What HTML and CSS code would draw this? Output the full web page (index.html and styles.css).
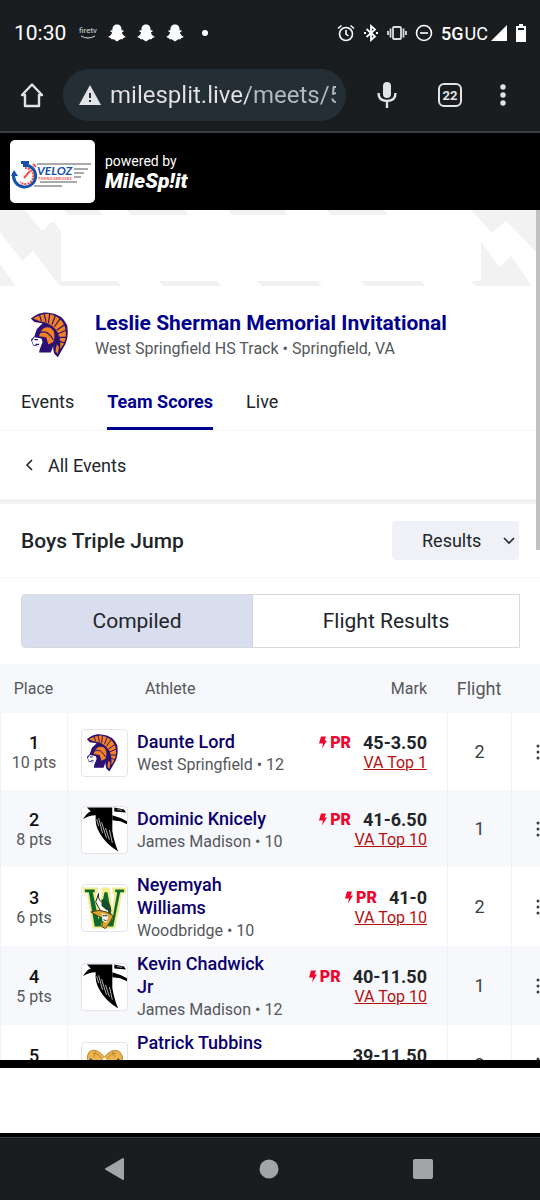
FILE: index.html
```html
<!DOCTYPE html>
<html lang="en">
<head>
<meta charset="utf-8">
<meta name="viewport" content="width=device-width, initial-scale=1">
<title>Leslie Sherman Memorial Invitational</title>
<link rel="stylesheet" href="styles.css">
</head>
<body>
<svg class="defs" aria-hidden="true">
  <symbol id="trojan" viewBox="0 0 46 46">
    <path d="M5 9Q12 3 20 4Q32 5 36 15Q38 27 32 35L28 42L25 39Q23 34 25 30L22 38L12 38L13 33L7 32L5 27L8 24L10 18L15 13L8 12Z" fill="#2a1173"/>
    <path d="M7 9Q13 5 20 5Q31 7 34 16Q37 27 30 35Q31 24 26 18Q21 12 12 11Z" fill="#f58220"/>
    <path d="M13 21Q16 15 22 17Q27 21 24 29L20 31L18 25L12 24Z" fill="#f58220"/>
    <path d="M27 31L29 33L28 39L26 37Z" fill="#f58220"/>
    <path d="M8 25L14 26L15 29L13 34L10 32L7 31L6 28Z" fill="#fff"/>
    <path d="M8 27L11 27M9 31L12 31" stroke="#2a1173" stroke-width="1"/>
    <path d="M12 5L14 11M16 4L18 12M21 5L20 13M26 6L23 14M30 9L25 16M34 14L27 19M35 19L28 22M35 25L29 25M34 30L29 28M13 21Q19 18 24 27" fill="none" stroke="#2a1173" stroke-width="1"/>
  </symbol>
  <symbol id="falcon" viewBox="0 0 46 46">
    <path d="M5 0H31V24Q33 36 37 45Q24 37 18 26Q13 18 14 8Q7 8 1 12Q5 5 9 4Z"/>
    <path d="M33 0L43 2L45 5L33 4Z"/><path d="M31 8L40 11L46 14V17L39 14L31 13Z"/>
    <path d="M32 0V8" stroke="#fff" stroke-width="1"/>
    <path d="M15 12L17 19M17 11L21 26M20 15L25 31M24 21L28 33M28 23L31 36" stroke="#b5b5b5" stroke-width="1"/>
    <path d="M36 2L41 3" stroke="#999"/>
  </symbol>
  <symbol id="viking" viewBox="0 0 46 46">
    <path d="M1 2H16V8H14L17 24L20 8V2H28L31 24L33 8H31V2H45V8H41L34 44H25L23 35L21 44H11L5 8H1Z" fill="#f3ea8c"/>
    <path d="M3 4H13V7H11L17 35L23 7H26L31 35L36 7H34V4H43V7H39L32 42H27L23 28L19 42H13L7 7H3Z" fill="#0b6b2f"/>
    <path d="M17 8Q16 14 20 17L28 23L27 28L19 26L14 17Z" fill="#fff" stroke="#222" stroke-width="1"/>
    <path d="M20 14Q30 15 30 27L25 25L20 21Z" fill="#174d2b"/>
    <path d="M9 27Q18 24 25 27L32 31L29 37L24 44L20 42L22 34L16 31Z" fill="#dca52c" stroke="#51431b" stroke-width="1"/>
    <path d="M20 28L27 31L25 38L21 36Z" fill="#fff"/><path d="M21 31H26M22 35L25 36" stroke="#222"/>
  </symbol>
  <symbol id="ram" viewBox="0 0 46 46">
    <path d="M23 14Q17 6 10 7Q4 9 6 20Q9 30 17 34L23 44L29 34Q38 30 41 20Q43 9 35 7Q28 7 23 14Z" fill="#edb34d" stroke="#b9852e"/>
    <path d="M11 10Q18 9 22 20M35 10Q28 9 24 20M14 8L12 14M31 8L33 14" fill="none" stroke="#b9852e"/>
    <path d="M8 16L15 21M38 16L31 21" stroke="#2b4763" stroke-width="2"/>
    <path d="M23 14L18 20L23 28L28 20Z" fill="#fff"/>
  </symbol>
  <symbol id="bolt" viewBox="0 0 8 12"><path d="M2 0H7L5.500 4H8L3 12L4 7H0Z" fill="#f0052f"/></symbol>
  <symbol id="dots" viewBox="0 0 4 16"><circle cx="2" cy="2" r="1.500"/><circle cx="2" cy="8" r="1.500"/><circle cx="2" cy="14" r="1.500"/></symbol>
  <symbol id="ghost" viewBox="0 0 18 18"><path fill="#fff" d="M9 .5C5.500 .5 4.300 3 4.400 6.500L2.600 6.200L2.300 7.300L4.100 8.600C3.500 10.700 2.300 12 .5 12.600C.4 13.700 2 13.900 3 14.200L3.400 15.300L5.700 15.200L9 17.500L12.300 15.200L14.600 15.300L15 14.200C16 13.900 17.600 13.700 17.500 12.600C15.700 12 14.500 10.700 13.900 8.600L15.700 7.300L15.400 6.200L13.600 6.500C13.700 3 12.500 .5 9 .5Z"/></symbol>
</svg>

<div class="phone">
  <div class="status">
    <span class="clock">10:30</span>
    <span class="fire"><span>firetv</span><svg width="16" height="4" viewBox="0 0 16 4"><path d="M1 1Q8 5 15 1" fill="none" stroke="#ddd"/></svg></span>
    <span class="ghosts"><svg><use href="#ghost"/></svg><svg><use href="#ghost"/></svg><svg><use href="#ghost"/></svg></span>
    <span class="pip"></span>
    <span class="system">
      <svg width="18" height="18" viewBox="0 0 18 18" fill="none" stroke="#fff" stroke-width="1.600"><circle cx="9" cy="10" r="6.500"/><path d="M9 6V10L11.500 12M1 4.500L4.500 1.500M17 4.500L13.500 1.500"/></svg>
      <svg width="16" height="18" viewBox="0 0 16 18" fill="none" stroke="#fff" stroke-width="1.800"><path d="M3.500 5L12 12.500L8 16V2L12 5.500L3.500 13"/><path d="M1 9H3M13 9H15" stroke-width="2"/></svg>
      <svg width="20" height="18" viewBox="0 0 20 18" fill="none" stroke="#ddd" stroke-width="1.800"><rect x="6" y="3" width="8" height="12" rx="1"/><path d="M3.500 4.500V13.500M16.500 4.500V13.500M1 7V11M19 7V11"/></svg>
      <svg width="18" height="18" viewBox="0 0 18 18" fill="none" stroke="#fff" stroke-width="1.600"><circle cx="9" cy="9" r="7.500"/><path d="M5 9H13"/></svg>
      <span class="net">5G<span>UC</span></span>
      <svg width="16" height="16" viewBox="0 0 16 16"><path d="M0 16L16 0V16Z" fill="#fff"/></svg>
      <svg class="battery" width="12" height="18" viewBox="0 0 12 18"><path d="M1 2H4V0H8V2H11V18H1Z" fill="#fff"/><path d="M3 5H9" stroke="#1a1d20" stroke-width="2"/></svg>
    </span>
  </div>

  <div class="browser">
    <button class="bare home" aria-label="Home"><svg width="24" height="26" viewBox="0 0 24 26"><path d="M12 2.500L2 13H5V24H19V13H22Z" fill="none" stroke="#e3e3e6" stroke-width="2.400" stroke-linejoin="round"/></svg></button>
    <div class="address">
      <svg width="22" height="20" viewBox="0 0 22 20"><path d="M11 0L22 20H0Z" fill="#e3e3e6"/><path d="M11 8V13M11 15V17" stroke="#242e35" stroke-width="2"/></svg>
      <input class="url" type="text" aria-label="Address" value="milesplit.live/meets/5">
    </div>
    <button class="bare mic" aria-label="Voice search"><svg width="20" height="28" viewBox="0 0 20 28"><rect x="6" y="1" width="8" height="16" rx="4" fill="#e3e3e6"/><path d="M1.500 12Q1.500 20 10 20Q18.500 20 18.500 12M10 20V27" fill="none" stroke="#e3e3e6" stroke-width="2.400"/></svg></button>
    <button class="bare tabs-count" aria-label="22 open tabs">22</button>
    <button class="bare more" aria-label="More"><svg width="6" height="22" viewBox="0 0 6 22" fill="#e3e3e6"><circle cx="3" cy="3" r="2.700"/><circle cx="3" cy="11" r="2.700"/><circle cx="3" cy="19" r="2.700"/></svg></button>
  </div>

  <header class="brand">
    <svg class="veloz" width="85" height="63" viewBox="0 0 85 63" role="img" aria-label="Veloz Timing Services">
      <rect width="85" height="63" rx="5" fill="#fff"/>
      <path d="M27 24H81M64 29H78M64 33H74M64 37H71M30 42H67M24 46H52" stroke="#555" stroke-width="1"/>
      <path d="M4 33A11 11 0 1 0 15 25" fill="none" stroke="#1550ab" stroke-width="3"/>
      <path d="M1 36L4 30L8 36ZM11 21H19V24H17V27H13V24H11Z" fill="#1550ab"/>
      <path d="M15 28A8 8 0 1 1 10 42" fill="none" stroke="#ef5145" stroke-width="2" stroke-dasharray="2 1"/>
      <path d="M14 38L20 31M23 24L26 27" stroke="#ef5145" stroke-width="2"/>
      <text x="27" y="35" class="veloz-name">VELOZ</text><text x="28" y="40" class="veloz-sub">TIMING SERVICES</text>
    </svg>
    <div class="powered">powered by<strong>MileSp!it</strong></div>
  </header>

  <main class="page">
    <div class="scrollbar"></div>
    <svg class="banner" viewBox="0 0 540 76" preserveAspectRatio="none" fill="#f2f2f2" aria-hidden="true">
      <path d="M0 0H25L42 21L53 11L61 21V71H117L121 76H60L33 41L22 51L0 22ZM0 54L16 76H0Z"/>
      <path d="M64 0H99L103 5H69ZM127 0H185L189 5H131ZM228 0H284L288 5H232ZM327 0H384L388 5H331Z"/>
      <path d="M158 71H217L221 76H164ZM257 71H318L322 76H262ZM360 71H421L425 76H365Z"/>
      <path d="M471 0H540V46L506 11L492 23ZM481 31L499 57L511 46L532 76H477L470 71H481Z"/>
    </svg>
    <section class="meet">
      <svg class="meet-logo" role="img" aria-label="West Springfield"><use href="#trojan"/></svg>
      <div><h1>Leslie Sherman Memorial Invitational</h1><p>West Springfield HS Track • Springfield, VA</p></div>
    </section>
    <nav class="tabs"><a href="#">Events</a><a href="#" class="active">Team Scores</a><a href="#">Live</a></nav>
    <a class="back" href="#"><svg width="8" height="12" viewBox="0 0 8 12"><path d="M7 1L2 6L7 11" fill="none" stroke="#212529" stroke-width="1.600"/></svg>All Events</a>
    <section class="event">
      <h2>Boys Triple Jump</h2>
      <div class="picker">
        <select aria-label="View"><option>Results</option></select>
        <svg width="12" height="8" viewBox="0 0 12 8"><path d="M1 1L6 6L11 1" fill="none" stroke="#212529" stroke-width="1.600"/></svg>
      </div>
    </section>
    <div class="switch"><button class="on">Compiled</button><button>Flight Results</button></div>

    <table>
      <colgroup><col class="c-place"><col class="c-athlete"><col><col class="c-flight"><col class="c-menu"></colgroup>
      <thead><tr><th>Place</th><th class="h-athlete">Athlete</th><th class="h-mark">Mark</th><th class="h-flight">Flight</th><th></th></tr></thead>
      <tbody>
        <tr>
          <td class="place"><b>1</b>10 pts</td>
          <td><div class="athlete"><svg><use href="#trojan"/></svg><div><a href="#">Daunte Lord</a><span>West Springfield • 12</span></div></div></td>
          <td class="mark"><div><svg><use href="#bolt"/></svg><em>PR</em><b>45-3.50</b></div><a href="#">VA Top 1</a></td>
          <td class="flight">2</td>
          <td><button class="menu" aria-label="Options"><svg><use href="#dots"/></svg></button></td>
        </tr>
        <tr>
          <td class="place"><b>2</b>8 pts</td>
          <td><div class="athlete"><svg><use href="#falcon"/></svg><div><a href="#">Dominic Knicely</a><span>James Madison • 10</span></div></div></td>
          <td class="mark"><div><svg><use href="#bolt"/></svg><em>PR</em><b>41-6.50</b></div><a href="#">VA Top 10</a></td>
          <td class="flight">1</td>
          <td><button class="menu" aria-label="Options"><svg><use href="#dots"/></svg></button></td>
        </tr>
        <tr>
          <td class="place"><b>3</b>6 pts</td>
          <td><div class="athlete"><svg><use href="#viking"/></svg><div><a href="#">Neyemyah Williams</a><span>Woodbridge • 10</span></div></div></td>
          <td class="mark"><div><svg><use href="#bolt"/></svg><em>PR</em><b>41-0</b></div><a href="#">VA Top 10</a></td>
          <td class="flight">2</td>
          <td><button class="menu" aria-label="Options"><svg><use href="#dots"/></svg></button></td>
        </tr>
        <tr>
          <td class="place"><b>4</b>5 pts</td>
          <td><div class="athlete"><svg><use href="#falcon"/></svg><div><a href="#">Kevin Chadwick Jr</a><span>James Madison • 12</span></div></div></td>
          <td class="mark"><div><svg><use href="#bolt"/></svg><em>PR</em><b>40-11.50</b></div><a href="#">VA Top 10</a></td>
          <td class="flight">1</td>
          <td><button class="menu" aria-label="Options"><svg><use href="#dots"/></svg></button></td>
        </tr>
        <tr>
          <td class="place"><b>5</b>&nbsp;</td>
          <td><div class="athlete"><svg><use href="#ram"/></svg><div class="tall"><a href="#">Patrick Tubbins</a></div></div></td>
          <td class="mark"><div><b>39-11.50</b></div>&nbsp;</td>
          <td class="flight">2</td>
          <td><button class="menu" aria-label="Options"><svg><use href="#dots"/></svg></button></td>
        </tr>
      </tbody>
    </table>
  </main>

  <div class="ad"></div>
  <nav class="softkeys">
    <button class="bare" aria-label="Back"><svg width="20" height="24" viewBox="0 0 20 24"><path d="M1 12L18 2V22Z" fill="#a2a4a6" stroke="#a2a4a6" stroke-width="2" stroke-linejoin="round"/></svg></button>
    <button class="bare" aria-label="Home"><svg width="20" height="20" viewBox="0 0 20 20"><circle cx="10" cy="10" r="9.500" fill="#a2a4a6"/></svg></button>
    <button class="bare" aria-label="Recent apps"><svg width="20" height="20" viewBox="0 0 20 20"><rect width="20" height="20" rx="2" fill="#a2a4a6"/></svg></button>
  </nav>
</div>
</body>
</html>
```
FILE: styles.css
```css
* { box-sizing: border-box; }
body { margin: 0; font-family: Roboto, sans-serif; color: #212529; background: #fff; }
h1, h2, p { margin: 0; }
a { text-decoration: none; color: inherit; }
svg { flex: none; display: block; }
.defs { position: absolute; width: 0; height: 0; }
.phone { display: flex; flex-direction: column; height: 100vh; }
.bare { background: none; border: 0; padding: 0; display: flex; align-items: center; justify-content: center; color: #e3e3e6; font-family: inherit; }

.status { flex: none; display: flex; align-items: center; height: 66px; padding: 0 13px 0 14px; background: #1a1d20; color: #fff; }
.clock { font-size: 21px; font-weight: 400; width: 64px; }
.fire { display: flex; flex-direction: column; align-items: center; width: 20px; font-size: 8px; line-height: 8px; color: #ddd; }
.ghosts { display: flex; gap: 11px; margin-left: 10px; }
.ghosts svg { width: 18px; height: 18px; }
.pip { width: 6px; height: 6px; border-radius: 50%; background: #fff; margin-left: 18px; }
.system { margin-left: auto; display: flex; align-items: center; gap: 8px; }
.net { font-size: 18px; font-weight: 500; display: flex; gap: 1px; margin-right: -5px; }
.net span { font-weight: 400; }

.browser { flex: none; display: flex; align-items: center; height: 67px; padding: 0 34px 7px 19px; background: #1a1d20; border-bottom: 2px solid #3a3f42; }
.home { width: 25px; }
.address { flex: 1; min-width: 0; display: flex; align-items: center; gap: 9px; height: 52px; margin-left: 19px; padding: 0 10px 0 16px; border-radius: 26px; background: #242e35; }
.url { flex: 1; min-width: 0; border: 0; padding: 0; outline: 0; font: 24px/32px Roboto, sans-serif; color: transparent; background: linear-gradient(90deg, #e3e3e6 61%, #b4babf 61%) text; }
.mic { margin-left: 31px; width: 20px; }
.tabs-count { width: 24px; height: 24px; margin-left: 41px; border: 2px solid #e3e3e6; border-radius: 6px; font-size: 13px; font-weight: 700; }
.more { margin-left: 38px; width: 6px; }

.brand { flex: none; display: flex; align-items: center; gap: 10px; height: 77px; padding: 0 10px; background: #000; color: #fff; }
.veloz-name { font: italic 700 12px Lato, sans-serif; fill: #1550ab; }
.veloz-sub { font: 700 4px Lato, sans-serif; fill: #ef5145; }
.powered { font-size: 14px; line-height: 18px; }
.powered strong { display: block; font-size: 21px; line-height: 22px; font-style: italic; font-weight: 900; }

.page { position: relative; flex: 1; min-height: 0; overflow: hidden; }
.scrollbar { position: absolute; z-index: 1; right: 0; top: 0; width: 4px; height: 40%; background: #c1c1c1; }
.banner { width: 100%; height: 76px; }
.meet { display: flex; align-items: center; gap: 16px; padding: 22px 21px 15px 25px; }
.meet-logo { width: 54px; height: 54px; }
h1 { font-size: 21px; line-height: 28px; font-weight: 700; color: #00008f; }
.meet p { font-size: 16px; line-height: 24px; color: #54575b; }
.tabs { display: flex; gap: 33px; padding: 0 21px; border-bottom: 1px solid #f8f8f8; font-size: 18px; }
.tabs a { padding: 12px 0; line-height: 26px; border-bottom: 3px solid transparent; }
.tabs .active { color: #00008f; font-weight: 700; border-color: #00008f; }
.back { display: flex; align-items: center; gap: 15px; height: 73px; padding: 0 25px; border-bottom: 5px solid #f2f2f3; font-size: 18px; }
.event { display: flex; align-items: center; justify-content: space-between; height: 74px; padding: 0 21px; border-bottom: 1px solid #f6f6f6; }
h2 { font-size: 21px; line-height: 28px; font-weight: 500; }
.picker { display: flex; align-items: center; position: relative; }
.picker svg { position: absolute; right: 4px; pointer-events: none; }
select { appearance: none; width: 127px; height: 39px; padding: 0 30px; border: 0; border-radius: 4px; background: #f0f1f7; color: #212529; font: 18px Roboto, sans-serif; }
.switch { display: flex; margin: 16px 20px 16px 21px; height: 54px; border: 1px solid #d8d9dc; border-radius: 4px 0 0 4px; overflow: hidden; }
.switch button { flex: 267; border: 0; padding: 0; background: #fff; color: #212529; font: 21px Roboto, sans-serif; }
.switch .on { flex: 231; background: #d9deee; border-right: 1px solid #d0d4e0; }

table { width: calc(100% + 23px); table-layout: fixed; border-collapse: separate; border-spacing: 0; }
.c-place { width: 67px; }
.c-athlete { width: 219px; }
.c-flight { width: 64px; }
.c-menu { width: 52px; }
th, td { padding: 0; }
th { height: 49px; background: #f7f8fc; font-size: 16px; font-weight: 400; color: #54575b; }
.h-athlete { text-align: left; padding-left: 78px; }
.h-mark { text-align: right; padding-right: 20px; }
.h-flight { font-size: 18px; }
td { height: 77px; border-left: 1px solid #f1f2f6; }
tbody tr:nth-child(even) { background: #f7f8fc; }
.place { padding-top: 2px; text-align: center; font-size: 16px; line-height: 20px; color: #54575b; }
.place b { display: block; font-size: 18px; font-weight: 500; color: #111; }
.athlete { display: flex; align-items: center; gap: 9px; padding: 6px 4px 4px 13px; }
.athlete svg { width: 47px; height: 48px; border: 1px solid #e4e4e8; border-radius: 4px; background: #fff; }
.athlete a { display: block; font-size: 18px; line-height: 23px; font-weight: 500; color: #0a006e; }
.athlete span { display: block; font-size: 16px; line-height: 23px; color: #54575b; white-space: nowrap; }
.tall { min-height: 69px; }
.mark { border-left: 0; padding: 2px 20px 0 0; text-align: right; font-size: 16px; line-height: 20px; }
.mark div { display: flex; align-items: center; justify-content: flex-end; }
.mark div svg { width: 8px; height: 13px; margin-right: 3px; }
.mark em { font-size: 16px; font-style: normal; font-weight: 900; color: #f0052f; margin-right: 12px; }
.mark b { font-size: 18px; font-weight: 700; }
.mark a { color: #b80f0f; text-decoration: underline; }
.flight { text-align: center; font-size: 18px; color: #3a3d41; }
.menu { display: block; width: 100%; height: 30px; margin: 0; padding: 0; border: 0; background: none; }
.menu svg { width: 4px; height: 16px; margin: auto; fill: #3a3d41; }

.ad { flex: none; height: 77px; background: #fff; border-top: 8px solid #000; border-bottom: 4px solid #000; }
.softkeys { flex: none; display: flex; align-items: center; justify-content: space-between; height: 63px; padding: 0 107px 0 105px; background: #1a1d20; border-top: 1px solid #3a3f42; }
```
